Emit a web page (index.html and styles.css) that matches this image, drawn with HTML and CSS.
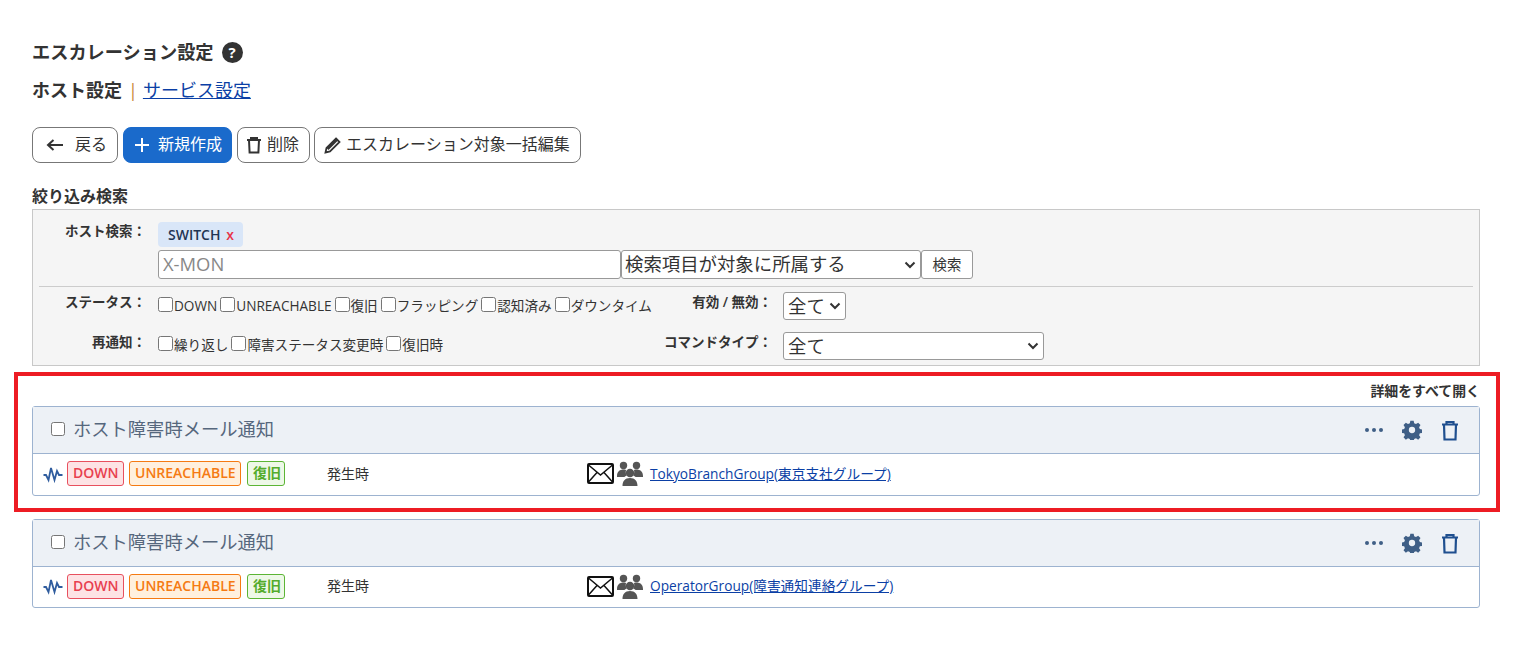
FILE: index.html
```html
<!DOCTYPE html>
<html lang="ja">
<head>
<meta charset="utf-8">
<title>エスカレーション設定</title>
<link rel="stylesheet" href="styles.css">
</head>
<body>
<main class="page">
  <h1 class="title">エスカレーション設定 <span class="help">?</span></h1>
  <div class="tabs"><b>ホスト設定</b><span class="sep">|</span><a href="#">サービス設定</a></div>
  <div class="actions">
    <button class="btn btn-back"><svg width="18" height="14" viewBox="0 0 18 14"><path d="M17 7H2M7.500 2 2 7l5.500 5" fill="none" stroke="#333" stroke-width="2"/></svg><span>戻る</span></button>
    <button class="btn btn-primary"><svg width="16" height="16" viewBox="0 0 16 16"><path d="M8 1v14M1 8h14" stroke="#fff" stroke-width="2"/></svg><span>新規作成</span></button>
    <button class="btn btn-delete"><svg width="16" height="18" viewBox="0 0 16 18"><path d="M1 4h14M5 4V2h6v2M3 4l.6 12.500h8.800L13 4" fill="none" stroke="#333" stroke-width="2"/></svg><span>削除</span></button>
    <button class="btn btn-edit"><svg width="17" height="17" viewBox="0 0 17 17"><path d="M12 1.500 15.500 5 6 14.500 1.500 15.500 2.500 11Z" fill="none" stroke="#333" stroke-width="1.800"/><path d="M2.500 11 12 1.500 14 3.500 4.500 13Z" fill="#333"/></svg><span>エスカレーション対象一括編集</span></button>
  </div>
  <h2 class="filter-title">絞り込み検索</h2>
  <section class="filter">
    <div class="host-row">
      <div class="label">ホスト検索：</div>
      <div class="host-fields">
        <div class="tag">SWITCH <span class="tag-x">x</span></div>
        <div class="search-line">
          <input class="text-input" placeholder="X-MON">
          <select class="select select-scope"><option>検索項目が対象に所属する</option></select>
          <button class="btn-search">検索</button>
        </div>
      </div>
    </div>
    <div class="status-row">
      <div class="label label-row">ステータス：</div>
      <div class="checks checks-status">
        <label><input type="checkbox">DOWN</label>
        <label><input type="checkbox">UNREACHABLE</label>
        <label><input type="checkbox">復旧</label>
        <label><input type="checkbox">フラッピング</label>
        <label><input type="checkbox">認知済み</label>
        <label><input type="checkbox">ダウンタイム</label>
      </div>
      <div class="label label-row label-right">有効 / 無効：</div>
      <select class="select select-small"><option>全て</option></select>
    </div>
    <div class="notify-row">
      <div class="label label-row">再通知：</div>
      <div class="checks checks-notify">
        <label><input type="checkbox">繰り返し</label>
        <label><input type="checkbox">障害ステータス変更時</label>
        <label><input type="checkbox">復旧時</label>
      </div>
      <div class="label label-row label-right">コマンドタイプ：</div>
      <select class="select select-wide"><option>全て</option></select>
    </div>
  </section>
  <section class="highlight">
    <div class="open-all">詳細をすべて開く</div>
    <article class="card">
      <header class="card-head">
        <input type="checkbox" class="card-check">
        <span class="card-title">ホスト障害時メール通知</span>
        <div class="card-tools">
          <span class="dots"><i></i><i></i><i></i></span>
          <svg class="gear" width="20" height="20" viewBox="0 0 24 24"><path fill="#3f5f86" fill-rule="evenodd" d="M10 1h4l.6 3 2.200.9 2.600-1.700 2.800 2.800-1.700 2.600.9 2.200 3 .6v4l-3 .6-.9 2.200 1.700 2.600-2.800 2.800-2.600-1.700-2.200.9-.6 3h-4l-.6-3-2.200-.9-2.600 1.700-2.800-2.800 1.700-2.600-.9-2.200-3-.6v-4l3-.6.9-2.200L1.800 6l2.800-2.800 2.600 1.700 2.200-.9ZM12 8.200a3.800 3.800 0 1 0 0 7.600 3.800 3.800 0 0 0 0-7.600Z"/></svg>
          <svg class="trash" width="18" height="21" viewBox="0 0 18 21"><path d="M1 4.500h16M5.500 4.500V2h7v2.500M3 4.500l.5 15h11l.5-15" fill="none" stroke="#1f4f8f" stroke-width="2.200"/></svg>
        </div>
      </header>
      <div class="card-body">
        <svg class="pulse" width="20" height="18" viewBox="0 0 20 18"><path d="M0.500 10h2.500L5.500 15 8 3l3.500 12 2.500-9 2 4h3.500" fill="none" stroke="#2f5c9e" stroke-width="1.800"/></svg>
        <span class="badge badge-down">DOWN</span>
        <span class="badge badge-unreach">UNREACHABLE</span>
        <span class="badge badge-ok">復旧</span>
        <span class="when">発生時</span>
        <svg class="mail" width="27" height="21" viewBox="0 0 27 21"><rect x="1" y="1" width="25" height="19" rx="1" fill="#fff" stroke="#111" stroke-width="2"/><path d="M1.500 2 13.500 12 25.500 2M1.500 19 10 9.500M25.500 19 17 9.500" fill="none" stroke="#111" stroke-width="1.500"/></svg>
        <svg class="group" width="26" height="25" viewBox="0 0 26 25"><g fill="#555"><circle cx="6.500" cy="4.500" r="3.700"/><circle cx="19.500" cy="4.500" r="3.700"/><circle cx="13" cy="12" r="4.200"/><path d="M0 15c0-4.500 3-6.500 6.500-6.500 1 0 1.800.1 2.500.4-.6 2.500 0 4.500 1 5.600-1.300.5-2 .8-2.500 1.500H0ZM26 15c0-4.500-3-6.500-6.500-6.500-1 0-1.800.1-2.500.4.6 2.500 0 4.500-1 5.600 1.300.5 2 .8 2.500 1.500H26ZM5.500 25c0-5 2.500-8 7.500-8s7.500 3 7.500 8Z"/></g></svg>
        <a class="group-link" href="#">TokyoBranchGroup(東京支社グループ)</a>
      </div>
    </article>
  </section>
  <article class="card card-second">
    <header class="card-head">
      <input type="checkbox" class="card-check">
      <span class="card-title">ホスト障害時メール通知</span>
      <div class="card-tools">
        <span class="dots"><i></i><i></i><i></i></span>
        <svg class="gear" width="20" height="20" viewBox="0 0 24 24"><path fill="#3f5f86" fill-rule="evenodd" d="M10 1h4l.6 3 2.200.9 2.600-1.700 2.800 2.800-1.700 2.600.9 2.200 3 .6v4l-3 .6-.9 2.200 1.700 2.600-2.800 2.800-2.600-1.700-2.200.9-.6 3h-4l-.6-3-2.200-.9-2.600 1.700-2.800-2.800 1.700-2.600-.9-2.200-3-.6v-4l3-.6.9-2.200L1.800 6l2.800-2.800 2.600 1.700 2.200-.9ZM12 8.200a3.800 3.800 0 1 0 0 7.600 3.800 3.800 0 0 0 0-7.600Z"/></svg>
        <svg class="trash" width="18" height="21" viewBox="0 0 18 21"><path d="M1 4.500h16M5.500 4.500V2h7v2.500M3 4.500l.5 15h11l.5-15" fill="none" stroke="#1f4f8f" stroke-width="2.200"/></svg>
      </div>
    </header>
    <div class="card-body">
      <svg class="pulse" width="20" height="18" viewBox="0 0 20 18"><path d="M0.500 10h2.500L5.500 15 8 3l3.500 12 2.500-9 2 4h3.500" fill="none" stroke="#2f5c9e" stroke-width="1.800"/></svg>
      <span class="badge badge-down">DOWN</span>
      <span class="badge badge-unreach">UNREACHABLE</span>
      <span class="badge badge-ok">復旧</span>
      <span class="when">発生時</span>
      <svg class="mail" width="27" height="21" viewBox="0 0 27 21"><rect x="1" y="1" width="25" height="19" rx="1" fill="#fff" stroke="#111" stroke-width="2"/><path d="M1.500 2 13.500 12 25.500 2M1.500 19 10 9.500M25.500 19 17 9.500" fill="none" stroke="#111" stroke-width="1.500"/></svg>
      <svg class="group" width="26" height="25" viewBox="0 0 26 25"><g fill="#555"><circle cx="6.500" cy="4.500" r="3.700"/><circle cx="19.500" cy="4.500" r="3.700"/><circle cx="13" cy="12" r="4.200"/><path d="M0 15c0-4.500 3-6.500 6.500-6.500 1 0 1.800.1 2.500.4-.6 2.500 0 4.500 1 5.600-1.300.5-2 .8-2.500 1.500H0ZM26 15c0-4.500-3-6.500-6.500-6.500-1 0-1.800.1-2.500.4.6 2.500 0 4.500-1 5.600 1.300.5 2 .8 2.500 1.500H26ZM5.500 25c0-5 2.500-8 7.500-8s7.500 3 7.500 8Z"/></g></svg>
      <a class="group-link" href="#">OperatorGroup(障害通知連絡グループ)</a>
    </div>
  </article>
</main>
</body>
</html>
```
FILE: styles.css
```css
* { box-sizing: border-box; }
html, body { margin: 0; padding: 0; background: #fff; }
body {
  font-family: "Open Sans", "Noto Sans CJK JP", sans-serif;
  color: #333;
  font-size: 14px;
  overflow: hidden;
}
.page { width: 1448px; margin-left: 32px; padding-top: 41px; }
.title {
  margin: 0;
  height: 22px;
  font-size: 18.200px;
  line-height: 22px;
  font-weight: 600;
  color: #333;
  display: flex;
  align-items: center;
  gap: 8px;
}
.help {
  width: 21px; height: 21px; border-radius: 50%;
  background: #333; color: #fff;
  font-size: 15px; line-height: 21px; text-align: center;
  font-weight: 700;
  font-family: "Open Sans", sans-serif;
}
.tabs {
  margin-top: 16px;
  height: 22px;
  font-size: 18px;
  line-height: 22px;
  display: flex;
}
.tabs b { font-weight: 600; }
.sep { color: #c98a3a; margin: 0 5px 0 6px; }
.tabs a, .group-link { color: #0b3fa5; text-decoration: underline; }
.actions { display: flex; gap: 5px; margin-top: 26px; height: 36px; }
.btn {
  height: 36px;
  border: 1px solid #777;
  border-radius: 8px;
  background: #fff;
  color: #333;
  font: 16px/1 "Open Sans", "Noto Sans CJK JP", sans-serif;
  display: flex;
  align-items: center;
  padding: 0;
}
.btn span { margin-top: -2px; }
.btn-back { width: 86px; padding-left: 13px; gap: 11px; }
.btn-primary { width: 109px; padding-left: 10px; gap: 8px; background: #1a6acb; border-color: #1a6acb; color: #fff; }
.btn-delete { width: 73px; padding-left: 8px; gap: 5px; }
.btn-edit { width: 267px; padding-left: 9px; gap: 5px; margin-left: -1px; }
.filter-title { margin: 23px 0 0; height: 21px; font-size: 16px; line-height: 21px; font-weight: 600; color: #333; }
.filter {
  height: 157px;
  margin-top: 2px;
  background: #f5f5f5;
  border: 1px solid #c8c8c8;
  padding: 12px 6px 0;
}
.label {
  width: 107px;
  flex: none;
  text-align: right;
  font-size: 13.500px;
  line-height: 18px;
  font-weight: 600;
  white-space: nowrap;
}
.label-row { margin-top: 1px; }
.host-row { display: flex; gap: 12px; height: 65px; border-bottom: 1px solid #ccc; }
.host-fields { display: flex; flex-direction: column; gap: 3px; }
.tag {
  width: 85px; height: 25px;
  background: #d9e6f8;
  border-radius: 4px;
  padding-left: 10px;
  font-size: 14px;
  line-height: 25px;
  font-weight: 600;
  color: #1f3553;
}
.tag-x { color: #e8334a; margin-left: 2px; }
.search-line { display: flex; height: 29px; }
.text-input {
  width: 463px; height: 29px;
  border: 1px solid #999; border-radius: 3px;
  padding: 0 4px 2px;
  font: 18.400px "Open Sans", sans-serif;
  background: #fff;
}
.text-input::placeholder { color: #888; }
.select {
  height: 29px;
  border: 1px solid #999; border-radius: 3px;
  appearance: none;
  background: #fff url("data:image/svg+xml,%3Csvg xmlns='http://www.w3.org/2000/svg' width='12' height='8' viewBox='0 0 12 8'%3E%3Cpath d='M1.500 1.500 6 6l4.500-4.500' fill='none' stroke='%23333' stroke-width='2'/%3E%3C/svg%3E") no-repeat right 4px center;
  color: #333;
  font: 18.400px "Open Sans", "Noto Sans CJK JP", sans-serif;
  padding: 0 0 2px 3px;
}
.select-scope { width: 300px; }
.btn-search {
  width: 52px; height: 29px;
  border: 1px solid #999; border-radius: 3px;
  background: #fff; color: #333;
  font: 14.400px "Open Sans", "Noto Sans CJK JP", sans-serif;
  padding: 0 0 2px;
}
.status-row, .notify-row { display: flex; align-items: flex-start; }
.status-row { height: 45px; padding-top: 5px; }
.notify-row { height: 34px; }
.checks { display: flex; gap: 3px; width: 504px; margin-left: 12px; font-size: 13.600px; }
.checks-status { padding-top: 4px; }
.checks-notify { padding-top: 3px; }
.checks label { display: flex; align-items: flex-start; line-height: 20px; white-space: nowrap; }
.checks input { width: 15px; height: 15px; margin: 1px 1px 0 0; flex: none; }
.label-right { width: 122px; padding-right: 11px; margin-left: -1px; }
.select-small { width: 63px; height: 28px; padding-left: 4px; }
.select-wide { width: 261px; height: 28px; padding-left: 4px; }
.highlight {
  margin: 6px -20px 0 -18px;
  height: 140px;
  border: 4px solid #ed1c24;
  padding: 4px 16px 0 14px;
}
.open-all { height: 26px; text-align: right; font-size: 13.900px; line-height: 22px; font-weight: 600; color: #333; }
.card { border: 1px solid #9db3d0; border-radius: 3px; background: #fff; height: 90px; }
.card-second { margin-top: 7px; height: 89px; }
.card-second .card-body { height: 40px; }
.card-head {
  height: 47px;
  background: #edf1f6;
  border-bottom: 1px solid #9db3d0;
  display: flex;
  align-items: center;
  padding-left: 18px;
}
.card-check { width: 14px; height: 14px; margin: 0 8px 2px 0; }
.card-title { font-size: 18.300px; color: #56677d; padding-bottom: 4px; }
.card-tools { margin-left: auto; display: flex; align-items: center; gap: 19px; padding-right: 20px; }
.dots { display: flex; gap: 3px; }
.dots i { width: 4px; height: 4px; border-radius: 50%; background: #3f5f86; }
.card-body { display: flex; align-items: center; height: 41px; padding: 0 0 2px 10px; }
.pulse { flex: none; margin-right: 4px; }
.badge {
  height: 25px;
  border: 1px solid;
  border-radius: 3px;
  font-size: 14px;
  line-height: 22px;
  font-weight: 600;
  padding: 0 5px;
  margin-right: 5px;
  white-space: nowrap;
}
.badge-down { width: 57px; color: #e8404f; background: #fde3e5; border-color: #e8505e; }
.badge-unreach { width: 112px; color: #f57a12; background: #fff0de; border-color: #f57a12; margin-right: 6px; }
.badge-ok { width: 38px; color: #54ac2c; background: #eef8e8; border-color: #5cb535; margin-right: 0; }
.when { width: 260px; margin: 0 0 2px 42px; flex: none; font-size: 14px; }
.mail { flex: none; }
.group { flex: none; margin-left: 3px; }
.group-link { margin: 0 0 2px 7px; font-size: 13.700px; }
```
